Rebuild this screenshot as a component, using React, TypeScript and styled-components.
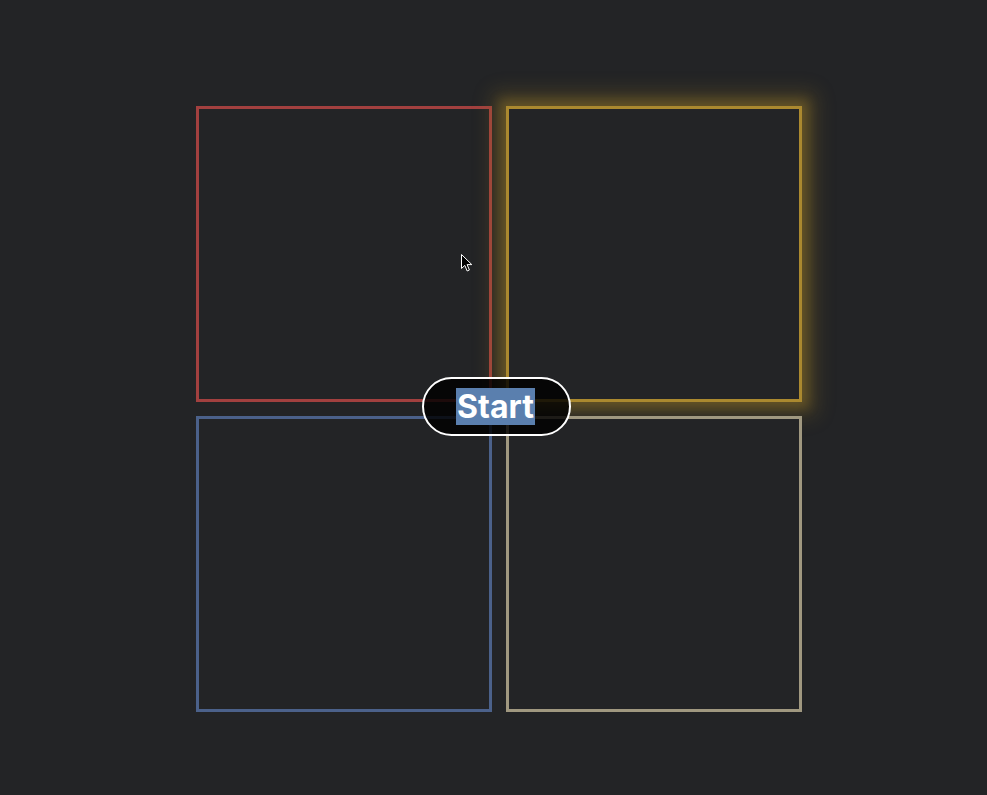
import React from "react";
import styled, { createGlobalStyle } from "styled-components";

const GlobalStyle = createGlobalStyle`
  html, body {
    margin: 0;
    padding: 0;
    background: #232426;
    font-family: Inter, "Liberation Sans", sans-serif;
  }
`;

const Page = styled.div`
  width: 987px;
  height: 795px;
  box-sizing: border-box;
  padding: 106px 0 0 196px;
  background: #232426;
  position: relative;
  overflow: hidden;
`;

const Board = styled.div`
  position: relative;
  display: grid;
  grid-template-columns: 296px 296px;
  grid-template-rows: 296px 296px;
  gap: 14px;
  width: 606px;
`;

const Pad = styled.div<{ $color: string; $lit?: boolean }>`
  box-sizing: border-box;
  border: 3px solid ${({ $color }) => $color};
  background: #232426;
  box-shadow: ${({ $lit }) =>
    $lit
      ? "0 0 18px 14px rgba(140, 112, 38, 0.32), 0 0 10px 6px rgba(168, 134, 44, 0.35)"
      : "none"};
`;

const StartButton = styled.button`
  position: absolute;
  left: 226px;
  top: 271px;
  width: 149px;
  height: 59px;
  box-sizing: border-box;
  border: 2px solid #ffffff;
  border-radius: 30px;
  background: rgba(0, 0, 0, 0.82);
  color: #ffffff;
  font-family: Inter, "Liberation Sans", sans-serif;
  font-weight: 700;
  font-size: 32px;
  display: flex;
  align-items: center;
  justify-content: center;
  padding: 0 2px 0 0;
  cursor: pointer;
  z-index: 2;
`;

const Selected = styled.span`
  background: #5a7fae;
  line-height: 37px;
  padding: 0 1px;
`;

const Pointer = styled.svg`
  position: absolute;
  left: 461px;
  top: 254px;
  z-index: 3;
`;

export default function App() {
  return (
    <>
      <GlobalStyle />
      <Page>
        <Board>
          <Pad $color="#a2403f" />
          <Pad $color="#ab892f" $lit />
          <Pad $color="#4b618a" />
          <Pad $color="#a09880" />
          <StartButton>
            <Selected>Start</Selected>
          </StartButton>
        </Board>
        <Pointer width="12" height="19" viewBox="0 0 12 19">
          <path
            d="M0.5 0.5 L0.5 14.5 L3.8 11.4 L6.2 17 L8.4 16 L6.1 10.6 L10.8 10.6 Z"
            fill="#000"
            stroke="#fff"
            strokeWidth="1"
            strokeLinejoin="round"
          />
        </Pointer>
      </Page>
    </>
  );
}
